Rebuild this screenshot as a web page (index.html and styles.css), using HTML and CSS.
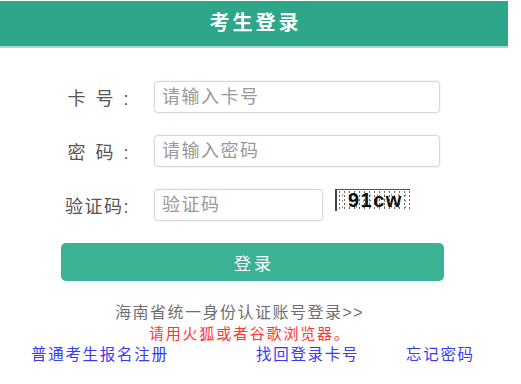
FILE: index.html
```html
<!DOCTYPE html>
<html lang="zh-CN">
<head>
<meta charset="utf-8">
<title>考生登录</title>
<link rel="stylesheet" href="styles.css">
</head>
<body>
<div class="page">
  <div class="title">考生登录</div>
  <form class="login">
    <div class="row">
      <label class="lbl">卡 号 :</label>
      <input class="ipt" type="text" placeholder="请输入卡号">
    </div>
    <div class="row">
      <label class="lbl">密 码 :</label>
      <input class="ipt" type="password" placeholder="请输入密码">
    </div>
    <div class="row">
      <label class="lbl">验证码:</label>
      <input class="ipt ipt-short" type="text" placeholder="验证码">
      <span class="captcha">91cw</span>
    </div>
    <button class="btn" type="button">登录</button>
  </form>
  <div class="notes">
    <p class="sso">海南省统一身份认证账号登录&gt;&gt;</p>
    <p class="warn">请用火狐或者谷歌浏览器。</p>
    <div class="links">
      <a href="#">普通考生报名注册</a>
      <a href="#">找回登录卡号</a>
      <a href="#">忘记密码</a>
    </div>
  </div>
</div>
</body>
</html>
```

FILE: styles.css
```css
* { box-sizing: border-box; }

body {
  margin: 0;
  background: #fff;
  font-family: "Liberation Sans", "Noto Sans CJK SC", sans-serif;
}

.page {
  width: 508px;
  padding-top: 1px;
}

.title {
  height: 47px;
  line-height: 45px;
  background: #2ea68a;
  border-bottom: 2px solid #a3dccb;
  color: #fff;
  text-align: center;
  font-size: 20px;
  font-weight: bold;
  letter-spacing: 3px;
  text-indent: 3px;
}

.login {
  margin: 0;
  padding-top: 33px;
}

.row {
  display: flex;
  align-items: center;
  height: 32px;
  margin-bottom: 22px;
}

.lbl {
  width: 130px;
  margin-right: 24px;
  text-align: right;
  font-size: 18px;
  letter-spacing: 1.5px;
  word-spacing: 2px;
  color: #555;
}

.ipt {
  width: 286px;
  height: 32px;
  padding: 0 7px;
  border: 1px solid #d8d8d8;
  border-radius: 4px;
  box-shadow: 0 0 2px rgba(0, 0, 0, 0.12);
  font-family: "Liberation Sans", "Noto Sans CJK SC", sans-serif;
  font-size: 18px;
  letter-spacing: 1.5px;
  color: #333;
  outline: none;
}

.ipt::placeholder {
  color: #999;
}

.ipt-short {
  width: 169px;
}

.captcha {
  align-self: flex-start;
  width: 75px;
  height: 22px;
  margin-left: 12px;
  padding-left: 11px;
  border-left: 2px solid #444;
  border-top: 1px solid #555;
  background:
    radial-gradient(circle, #666 0.7px, transparent 1.1px) 0 0 / 5px 4px,
    radial-gradient(circle, #999 0.7px, transparent 1.1px) 2px 2px / 7px 6px,
    #fff;
  font-family: "Liberation Sans", sans-serif;
  font-weight: bold;
  font-size: 20px;
  line-height: 21px;
  letter-spacing: 1.5px;
  color: #111;
  overflow: hidden;
  white-space: nowrap;
}

.btn {
  display: block;
  width: 383px;
  height: 38px;
  margin: 4px 0 0 61px;
  border: 0;
  border-radius: 5px;
  background: #3bb294;
  color: #fff;
  font-family: "Liberation Sans", "Noto Sans CJK SC", sans-serif;
  font-size: 17px;
  letter-spacing: 3px;
  text-indent: 3px;
  cursor: pointer;
}

.notes {
  margin-top: 21px;
}

.notes p {
  margin: 0;
  line-height: 21px;
}

.sso {
  padding-left: 115px;
  font-size: 16px;
  letter-spacing: 1.5px;
  color: #6e6e6e;
}

.warn {
  padding-left: 149px;
  font-size: 15px;
  letter-spacing: 1.8px;
  color: #ff3434;
}

.links {
  display: grid;
  grid-template-columns: 225px 150px auto;
  padding-left: 31px;
  line-height: 21px;
}

.links a {
  font-size: 15.5px;
  letter-spacing: 1.7px;
  color: #3a3af5;
  text-decoration: none;
}
```
